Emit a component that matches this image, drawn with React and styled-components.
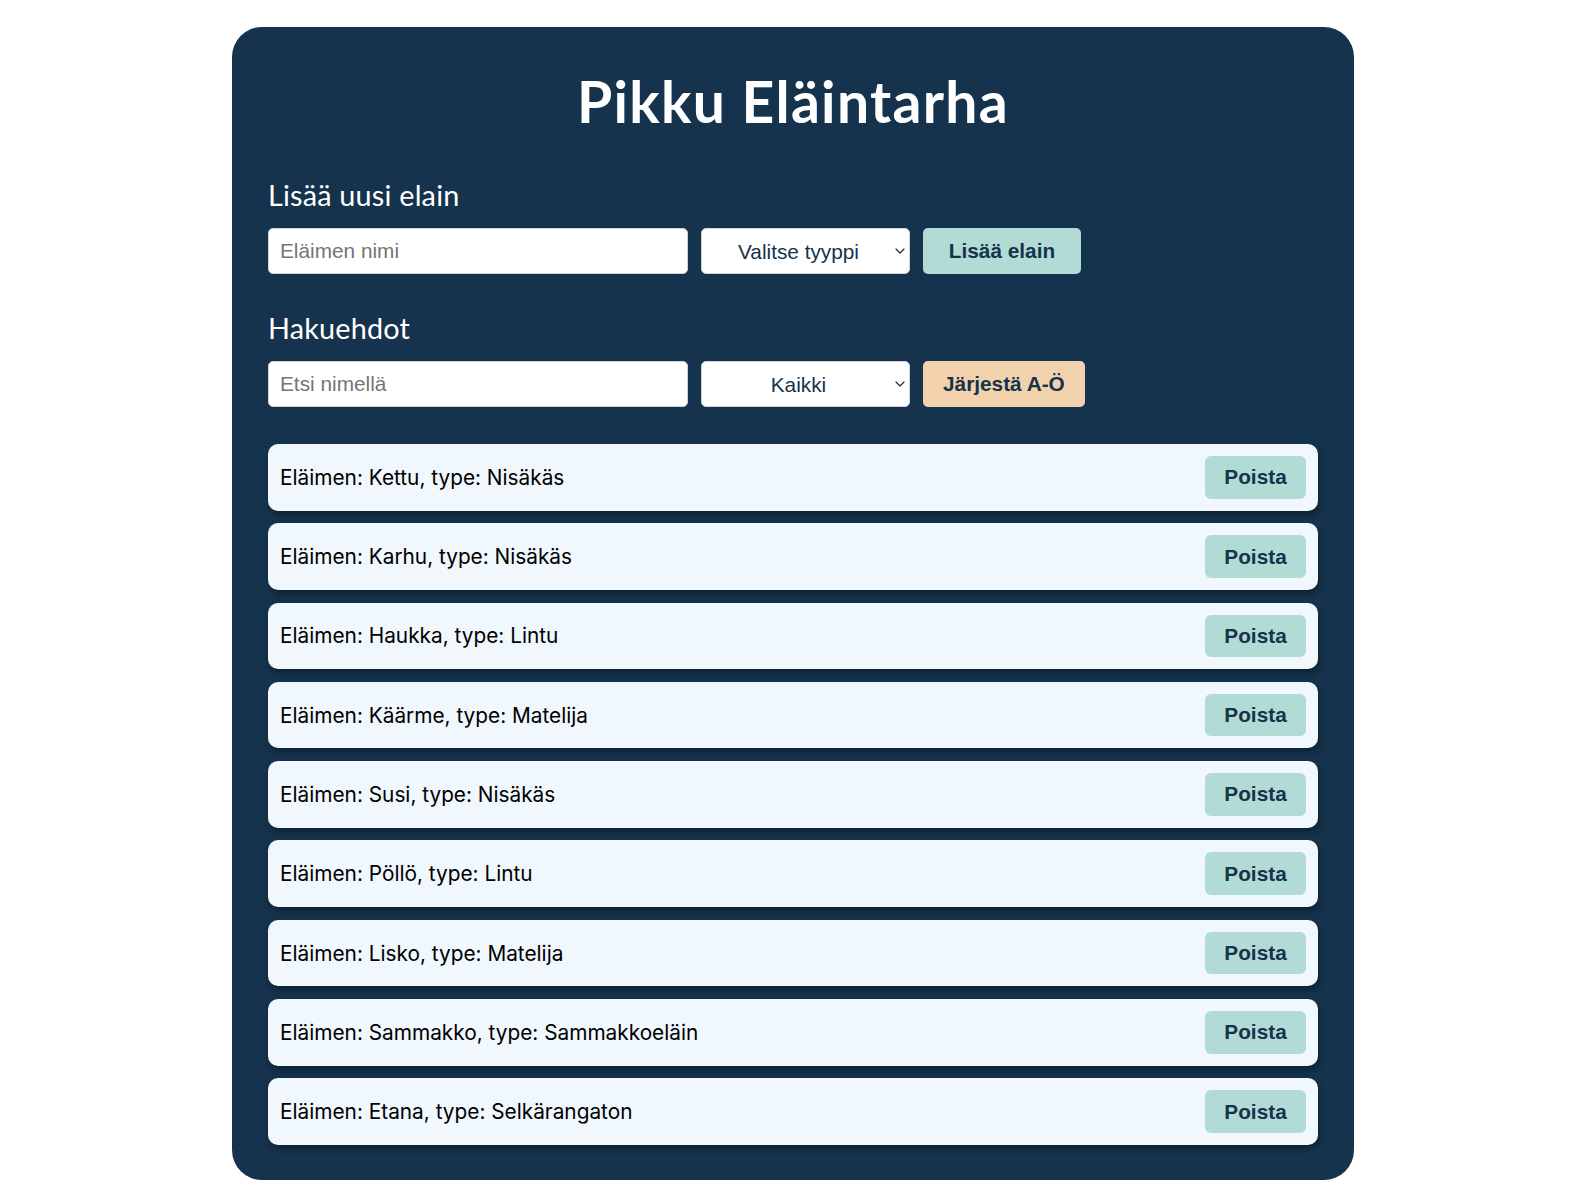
import React from "react";
import styled, { createGlobalStyle } from "styled-components";

const GlobalStyle = createGlobalStyle`
  * { box-sizing: border-box; }
  html, body { margin: 0; padding: 0; background: #ffffff; }
  body { font-family: "Liberation Sans", Arial, sans-serif; }
`;

const NAVY = "#15334c";

const Panel = styled.main`
  width: 1122px;
  margin: 27px 0 9px 232px;
  background: ${NAVY};
  border-radius: 30px;
  padding: 41px 36px 35px;
  display: flex;
  flex-direction: column;
`;

const Title = styled.h1`
  margin: 0 0 43px;
  font-family: Lato, "Open Sans", sans-serif;
  font-weight: 700;
  font-size: 57px;
  line-height: 67px;
  color: #ffffff;
  text-align: center;
  letter-spacing: 1.3px;
`;

const SectionTitle = styled.h2`
  margin: ${(p) => (p.$first ? "0" : "37px")} 0 15px;
  font-family: Lato, "Open Sans", sans-serif;
  font-weight: 400;
  font-size: 28.8px;
  line-height: 35px;
  color: #ffffff;
  letter-spacing: 0.2px;
`;

const Row = styled.div`
  display: flex;
  align-items: stretch;
  gap: 13px;
  height: 46px;
`;

const TextInput = styled.input`
  width: 420px;
  height: 46px;
  border: 1px solid #cfd4d9;
  border-radius: 5px;
  background: #ffffff;
  padding: 0 11px;
  font-family: "Liberation Sans", Arial, sans-serif;
  font-size: 20.8px;
  color: ${NAVY};
  outline: none;
  &::placeholder { color: #757575; }
`;

const SelectWrap = styled.div`
  position: relative;
  width: 209px;
  height: 46px;
`;

const Select = styled.select`
  appearance: none;
  -webkit-appearance: none;
  width: 100%;
  height: 100%;
  border: 1px solid #cfd4d9;
  border-radius: 5px;
  background: #ffffff;
  padding: 0 18px 0 4px;
  font-family: "Liberation Sans", Arial, sans-serif;
  font-size: 20.8px;
  color: ${NAVY};
  text-align: center;
  text-align-last: center;
  outline: none;
`;

const Chevron = styled.svg`
  position: absolute;
  right: 5px;
  top: 50%;
  margin-top: -3px;
  width: 10px;
  height: 6px;
  pointer-events: none;
`;

const ActionButton = styled.button`
  min-width: 158px;
  height: 46px;
  padding: 0 20px;
  border: none;
  border-radius: 5px;
  background: ${(p) => (p.$tone === "peach" ? "#f2d1ad" : "#b2dbd5")};
  color: ${NAVY};
  font-family: "Liberation Sans", Arial, sans-serif;
  font-weight: 700;
  font-size: 20.8px;
  cursor: pointer;
`;

const List = styled.ul`
  list-style: none;
  margin: 37px 0 0;
  padding: 0;
  display: flex;
  flex-direction: column;
  gap: 12.8px;
`;

const Item = styled.li`
  display: flex;
  align-items: center;
  justify-content: space-between;
  background: #f0f7fd;
  border-radius: 10px;
  padding: 12px;
  box-shadow: 2px 4px 6px rgba(0, 0, 0, 0.35);
`;

const ItemText = styled.span`
  font-family: Inter, "Noto Sans", sans-serif;
  font-size: 20.8px;
  color: #000000;
`;

const RemoveButton = styled.button`
  width: 101px;
  height: 42.5px;
  border: none;
  border-radius: 6px;
  background: #b2dbd5;
  color: ${NAVY};
  font-family: "Liberation Sans", Arial, sans-serif;
  font-weight: 700;
  font-size: 20.8px;
  cursor: pointer;
`;

const animals = [
  ["Kettu", "Nisäkäs"],
  ["Karhu", "Nisäkäs"],
  ["Haukka", "Lintu"],
  ["Käärme", "Matelija"],
  ["Susi", "Nisäkäs"],
  ["Pöllö", "Lintu"],
  ["Lisko", "Matelija"],
  ["Sammakko", "Sammakkoeläin"],
  ["Etana", "Selkärangaton"],
];

function SelectBox({ options }) {
  return (
    <SelectWrap>
      <Select defaultValue={options[0]}>
        {options.map((o) => (
          <option key={o} value={o}>
            {o}
          </option>
        ))}
      </Select>
      <Chevron viewBox="0 0 10 6">
        <path d="M1 1 L5 5 L9 1" fill="none" stroke="#15334c" strokeWidth="1.2" strokeLinecap="round" strokeLinejoin="round" />
      </Chevron>
    </SelectWrap>
  );
}

export default function App() {
  return (
    <>
      <GlobalStyle />
      <Panel>
        <Title>Pikku Eläintarha</Title>
        <SectionTitle $first>Lisää uusi elain</SectionTitle>
        <Row>
          <TextInput placeholder="Eläimen nimi" />
          <SelectBox options={["Valitse tyyppi", "Nisäkäs", "Lintu", "Matelija", "Sammakkoeläin", "Selkärangaton"]} />
          <ActionButton>Lisää elain</ActionButton>
        </Row>
        <SectionTitle>Hakuehdot</SectionTitle>
        <Row>
          <TextInput placeholder="Etsi nimellä" />
          <SelectBox options={["Kaikki", "Nisäkäs", "Lintu", "Matelija", "Sammakkoeläin", "Selkärangaton"]} />
          <ActionButton $tone="peach">Järjestä A-Ö</ActionButton>
        </Row>
        <List>
          {animals.map(([name, type]) => (
            <Item key={name}>
              <ItemText>
                Eläimen: {name}, type: {type}
              </ItemText>
              <RemoveButton>Poista</RemoveButton>
            </Item>
          ))}
        </List>
      </Panel>
    </>
  );
}
